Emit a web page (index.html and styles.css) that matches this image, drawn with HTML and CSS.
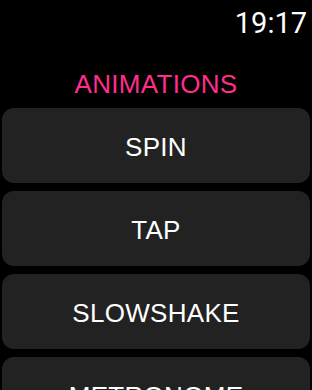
FILE: index.html
```html
<!DOCTYPE html>
<html>
<head>
<meta charset="utf-8">
<link rel="stylesheet" href="styles.css">
</head>
<body>
<div class="screen">
  <div class="status"><span class="time">19:17</span></div>
  <h1 class="title">ANIMATIONS</h1>
  <div class="list">
    <div class="btn">SPIN</div>
    <div class="btn">TAP</div>
    <div class="btn">SLOWSHAKE</div>
    <div class="btn">METRONOME</div>
  </div>
</div>
</body>
</html>
```
FILE: styles.css
```css
html, body {
  margin: 0;
  padding: 0;
  background: #000;
}
.screen {
  width: 312px;
  height: 390px;
  overflow: hidden;
  background: #000;
  font-family: "Liberation Sans", Arial, sans-serif;
}
.status {
  display: flex;
  justify-content: flex-end;
  padding: 6px 5px 0 0;
  height: 34px;
}
.time {
  font-family: Roboto, "Liberation Sans", sans-serif;
  font-weight: 400;
  font-size: 29px;
  line-height: 34px;
  color: #fff;
}
.title {
  margin: 29px 0 0 0;
  font-size: 26px;
  line-height: 30px;
  font-weight: 400;
  letter-spacing: 0.3px;
  color: #ff2d8c;
  text-align: center;
}
.list {
  margin: 9px 2px 0 2px;
  display: flex;
  flex-direction: column;
  gap: 8px;
}
.btn {
  height: 75px;
  box-sizing: border-box;
  padding-top: 3px;
  border-radius: 12px;
  background: #222222;
  color: #fff;
  font-size: 26px;
  line-height: 30px;
  letter-spacing: 0.3px;
  display: flex;
  align-items: center;
  justify-content: center;
}
```
